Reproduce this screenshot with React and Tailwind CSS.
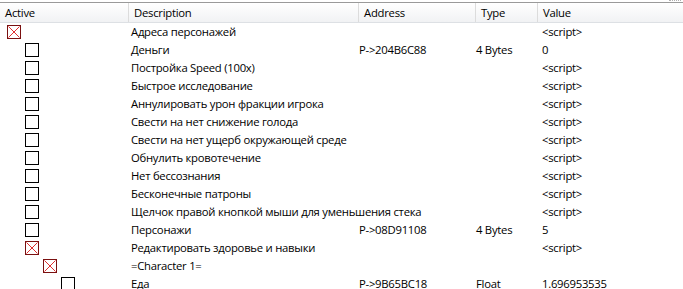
import React from 'react';

const rows = [
    { level: 0, checked: true, desc: 'Адреса персонажей', addr: '', type: '', value: '<script>' },
    { level: 1, checked: false, desc: 'Деньги', addr: 'P->204B6C88', type: '4 Bytes', value: '0' },
    { level: 1, checked: false, desc: 'Постройка Speed (100x)', addr: '', type: '', value: '<script>' },
    { level: 1, checked: false, desc: 'Быстрое исследование', addr: '', type: '', value: '<script>' },
    { level: 1, checked: false, desc: 'Аннулировать урон фракции игрока', addr: '', type: '', value: '<script>' },
    { level: 1, checked: false, desc: 'Свести на нет снижение голода', addr: '', type: '', value: '<script>' },
    { level: 1, checked: false, desc: 'Свести на нет ущерб окружающей среде', addr: '', type: '', value: '<script>' },
    { level: 1, checked: false, desc: 'Обнулить кровотечение', addr: '', type: '', value: '<script>' },
    { level: 1, checked: false, desc: 'Нет бессознания', addr: '', type: '', value: '<script>' },
    { level: 1, checked: false, desc: 'Бесконечные патроны', addr: '', type: '', value: '<script>' },
    { level: 1, checked: false, desc: 'Щелчок правой кнопкой мыши для уменьшения стека', addr: '', type: '', value: '<script>' },
    { level: 1, checked: false, desc: 'Персонажи', addr: 'P->08D91108', type: '4 Bytes', value: '5' },
    { level: 1, checked: true, desc: 'Редактировать здоровье и навыки', addr: '', type: '', value: '<script>' },
    { level: 2, checked: true, desc: '=Character 1=', addr: '', type: '', value: '' },
    { level: 3, checked: false, desc: 'Еда', addr: 'P->9B65BC18', type: 'Float', value: '1.696953535' },
];

const indents = ['pl-[7px]', 'pl-[25px]', 'pl-[43px]', 'pl-[61px]'];

function CheckBox({ checked }) {
    if (!checked) {
        return <div className="w-[14px] h-[14px] border border-black bg-white" />;
    }
    return (
        <svg width="14" height="14" viewBox="0 0 14 14" className="block">
            <rect x="0.5" y="0.5" width="13" height="13" fill="#fff" stroke="#7a1010" />
            <line x1="1.5" y1="1.5" x2="12.5" y2="12.5" stroke="#e03030" strokeWidth="1" />
            <line x1="12.5" y1="1.5" x2="1.5" y2="12.5" stroke="#e03030" strokeWidth="1" />
        </svg>
    );
}

function HeaderCell({ label, width, last }) {
    return (
        <div
            className={`${width} h-full flex items-center pl-[5px] pt-[1px] ${
                last ? '' : 'border-r border-[#dcdcdc]'
            }`}
        >
            {label}
        </div>
    );
}

export default function App() {
    return (
        <div
            className="w-[683px] h-[289px] overflow-hidden bg-white text-black text-[11.3px] tracking-[-0.26px] leading-none"
            style={{ fontFamily: '"Open Sans", "Noto Sans", sans-serif' }}
        >
            <div className="h-[2px] bg-white relative">
                <div className="absolute right-[2px] top-0 w-[12px] h-[2px] border-t border-dotted border-[#b0b0b0]" />
            </div>
            <div className="h-[1px] bg-[#9a9a9a]" />
            <div className="h-[20px] flex bg-gradient-to-b from-white to-[#f1f2f4] border-b border-[#dde0e4]">
                <HeaderCell label="Active" width="w-[129px]" />
                <HeaderCell label="Description" width="w-[230px]" />
                <HeaderCell label="Address" width="w-[117px]" />
                <HeaderCell label="Type" width="w-[62px]" />
                <HeaderCell label="Value" width="flex-1" last />
            </div>
            <div>
                {rows.map((r, i) => (
                    <div key={i} className="h-[18px] flex items-center">
                        <div className={`w-[129px] ${indents[r.level]}`}>
                            <CheckBox checked={r.checked} />
                        </div>
                        <div className="w-[230px] pl-[2px] whitespace-nowrap">{r.desc}</div>
                        <div className="w-[117px] whitespace-nowrap">{r.addr}</div>
                        <div className="w-[66px] whitespace-nowrap">{r.type}</div>
                        <div className="flex-1 whitespace-nowrap">{r.value}</div>
                    </div>
                ))}
            </div>
        </div>
    );
}
